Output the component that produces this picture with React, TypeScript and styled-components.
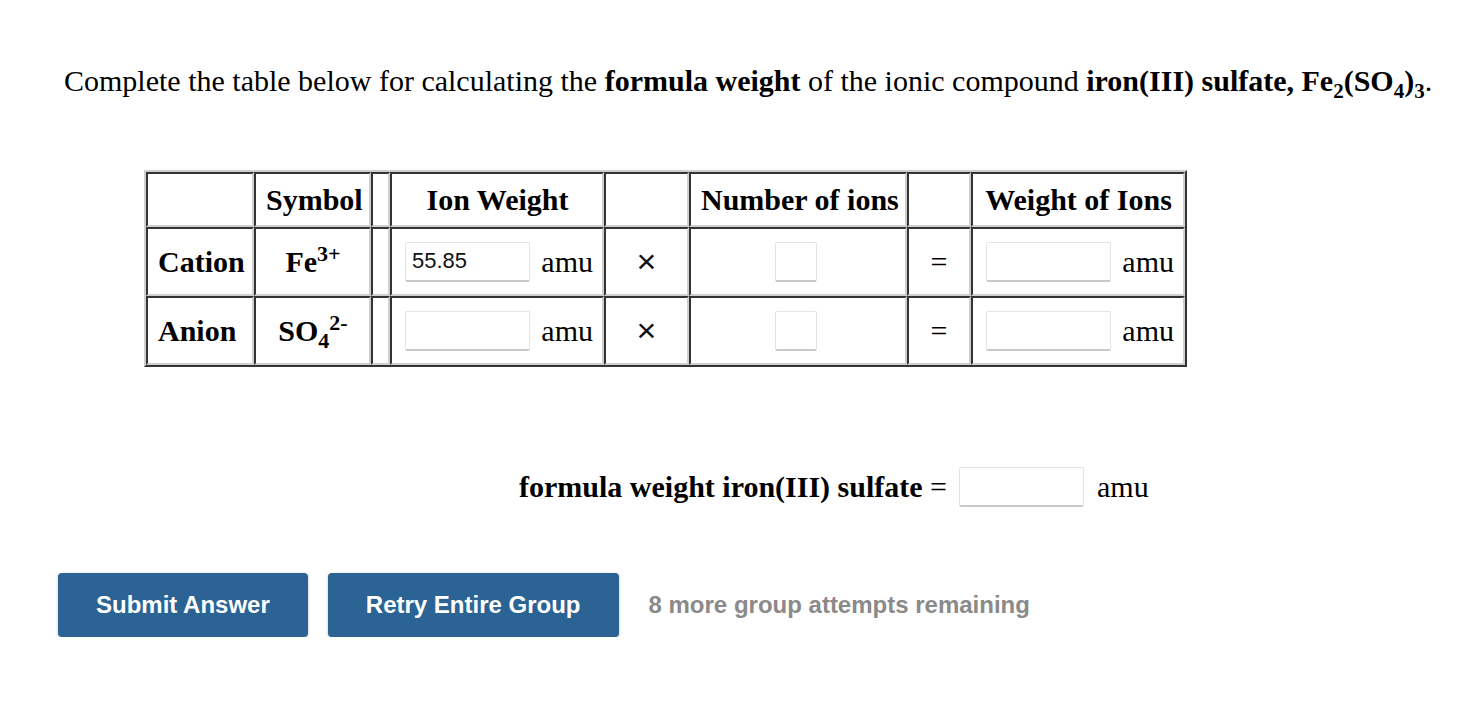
import React from 'react';
import styled, { createGlobalStyle } from 'styled-components';

const GlobalStyle = createGlobalStyle`
  * { box-sizing: border-box; }
  body {
    margin: 0;
    background: #ffffff;
    font-family: "Liberation Serif", "Times New Roman", serif;
    color: #000;
  }
`;

const Page = styled.div`
  padding: 64px 0 0 58px;
`;

const Prompt = styled.p`
  margin: 0 0 0 6px;
  font-size: 30px;
  line-height: 34px;
  white-space: nowrap;

  sub { font-size: 21px; line-height: 0; }
`;

const Table = styled.table`
  margin: 72px 0 0 86px;
  border-collapse: separate;
  border-spacing: 0;
  table-layout: fixed;
  width: 1043px;
  border: 2px solid;
  border-color: #cfcfcf #333 #333 #cfcfcf;
`;

const Cell = styled.td<{ $w?: number; $align?: string; $head?: boolean; $empty?: boolean }>`
  width: ${({ $w }) => ($w ? `${$w}px` : 'auto')};
  height: ${({ $head }) => ($head ? '55px' : '69px')};
  border: 2px solid;
  border-color: #333 #cfcfcf #cfcfcf #333;
  padding: ${({ $empty }) => ($empty ? '0' : '0 9px 0 10px')};
  text-align: ${({ $align }) => $align || 'center'};
  font-size: 30px;
  font-weight: ${({ $head }) => ($head ? 700 : 400)};
  vertical-align: middle;
  white-space: nowrap;
`;

const RowLabel = styled.span`
  font-weight: 700;
`;

const Formula = styled.span`
  font-weight: 700;
  sup, sub { font-size: 22px; line-height: 0; }
`;

const InputGroup = styled.div<{ $center?: boolean }>`
  display: flex;
  align-items: center;
  justify-content: ${({ $center }) => ($center ? 'center' : 'space-between')};
  padding-left: ${({ $center }) => ($center ? '0' : '3px')};
  margin-left: ${({ $center }) => ($center ? '-6px' : '0')};
`;

const Field = styled.input<{ $w: number }>`
  width: ${({ $w }) => $w}px;
  height: 40px;
  border: 1px solid #e4e4e4;
  border-bottom: 2px solid #c8c8c8;
  border-radius: 2px;
  padding: 0 6px;
  font-family: "Liberation Sans", Arial, sans-serif;
  font-size: 22px;
  color: #111;
  background: #fff;
  outline: none;
`;

const Unit = styled.span`
  font-size: 30px;
`;

const Times = styled.span`
  font-family: "Liberation Sans", Arial, sans-serif;
  font-size: 34px;
  color: #111;
`;

const TotalRow = styled.div`
  display: flex;
  align-items: center;
  margin: 100px 0 0 461px;
  font-size: 30px;
  white-space: pre;
`;

const TotalLabel = styled.span`
  font-weight: 700;
`;

const TotalField = styled(Field)`
  margin-left: 12px;
`;

const TotalUnit = styled.span`
  margin-left: 13px;
`;

const Actions = styled.div`
  display: flex;
  align-items: center;
  gap: 20px;
  margin-top: 66px;
`;

const Button = styled.button`
  height: 64px;
  padding: 0 38px;
  border: none;
  border-radius: 4px;
  background: #2b6394;
  color: #fff;
  font-family: "Liberation Sans", Arial, sans-serif;
  font-weight: 700;
  font-size: 24px;
  box-shadow: 0 1px 3px rgba(0, 0, 0, 0.25);
  cursor: pointer;
`;

const Remaining = styled.span`
  margin-left: 10px;
  font-family: "Liberation Sans", Arial, sans-serif;
  font-weight: 700;
  font-size: 24px;
  color: #8a8a8a;
`;

const widths = [108, 117, 19, 214, 85, 218, 64, 214];

const rows = [
  { label: 'Cation', symbol: <Formula>Fe<sup>3+</sup></Formula>, weight: '55.85' },
  { label: 'Anion', symbol: <Formula>SO<sub>4</sub><sup>2-</sup></Formula>, weight: '' },
];

export default function App() {
  return (
    <>
      <GlobalStyle />
      <Page>
        <Prompt>
          Complete the table below for calculating the <b>formula weight</b> of the ionic
          compound <b>iron(III) sulfate, Fe<sub>2</sub>(SO<sub>4</sub>)<sub>3</sub></b>.
        </Prompt>

        <Table>
          <tbody>
            <tr>
              <Cell $head $empty $w={widths[0]} />
              <Cell $head $w={widths[1]}>Symbol</Cell>
              <Cell $head $empty $w={widths[2]} />
              <Cell $head $w={widths[3]}>Ion Weight</Cell>
              <Cell $head $empty $w={widths[4]} />
              <Cell $head $w={widths[5]}>Number of ions</Cell>
              <Cell $head $empty $w={widths[6]} />
              <Cell $head $w={widths[7]}>Weight of Ions</Cell>
            </tr>
            {rows.map((r) => (
              <tr key={r.label}>
                <Cell $align="left">
                  <RowLabel>{r.label}</RowLabel>
                </Cell>
                <Cell>{r.symbol}</Cell>
                <Cell $empty />
                <Cell>
                  <InputGroup>
                    <Field $w={125} defaultValue={r.weight} />
                    <Unit>amu</Unit>
                  </InputGroup>
                </Cell>
                <Cell $empty>
                  <Times>×</Times>
                </Cell>
                <Cell>
                  <InputGroup $center>
                    <Field $w={42} />
                  </InputGroup>
                </Cell>
                <Cell $empty>=</Cell>
                <Cell>
                  <InputGroup>
                    <Field $w={125} />
                    <Unit>amu</Unit>
                  </InputGroup>
                </Cell>
              </tr>
            ))}
          </tbody>
        </Table>

        <TotalRow>
          <TotalLabel>formula weight iron(III) sulfate</TotalLabel>
          <span> =</span>
          <TotalField $w={125} />
          <TotalUnit>amu</TotalUnit>
        </TotalRow>

        <Actions>
          <Button>Submit Answer</Button>
          <Button>Retry Entire Group</Button>
          <Remaining>8 more group attempts remaining</Remaining>
        </Actions>
      </Page>
    </>
  );
}
